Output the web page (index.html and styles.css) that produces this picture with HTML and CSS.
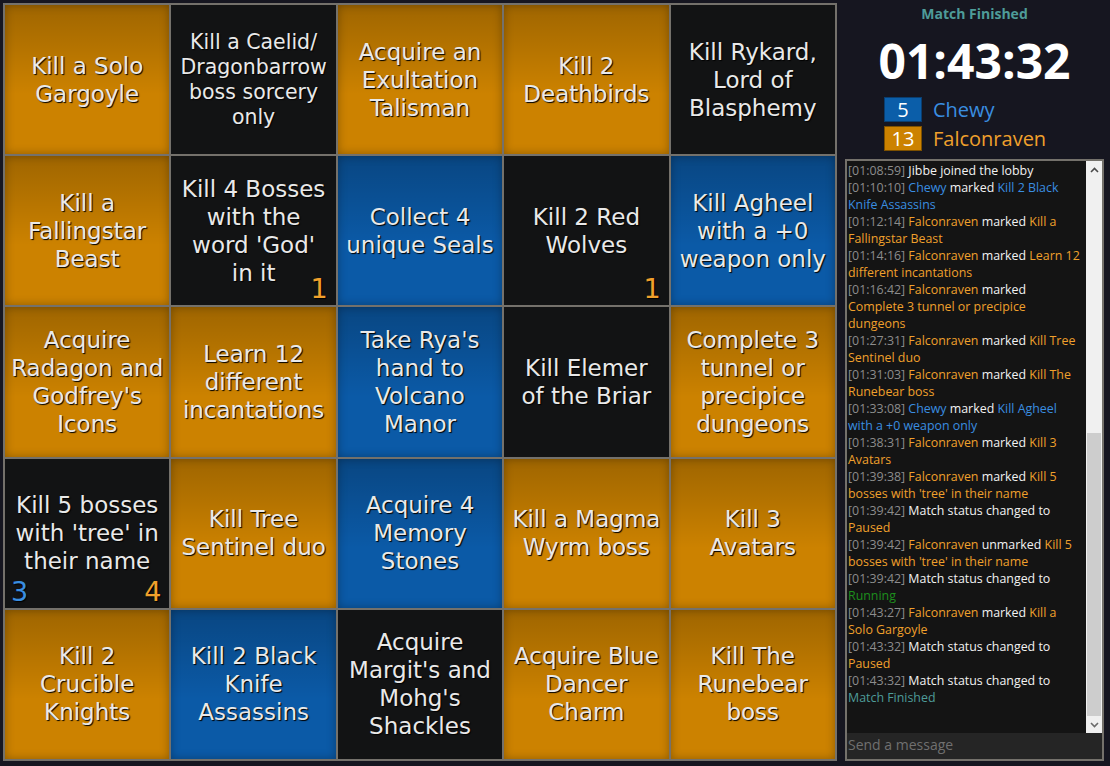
FILE: index.html
```html
<!DOCTYPE html>
<html lang="en">
<head>
<meta charset="utf-8">
<title>Bingo Match</title>
<link rel="stylesheet" href="styles.css">
</head>
<body>
<div class="app">
  <main class="board">
    <div class="tile orange"><span class="label">Kill a Solo<br>Gargoyle</span></div>
    <div class="tile black small"><span class="label">Kill a Caelid/<br>Dragonbarrow<br>boss sorcery<br>only</span></div>
    <div class="tile orange"><span class="label">Acquire an<br>Exultation<br>Talisman</span></div>
    <div class="tile orange"><span class="label">Kill 2<br>Deathbirds</span></div>
    <div class="tile black"><span class="label">Kill Rykard,<br>Lord of<br>Blasphemy</span></div>

    <div class="tile orange"><span class="label">Kill a<br>Fallingstar<br>Beast</span></div>
    <div class="tile black"><span class="label">Kill 4 Bosses<br>with the<br>word 'God'<br>in it</span><span class="mark right c-orange">1</span></div>
    <div class="tile blue"><span class="label">Collect 4<br>unique Seals</span></div>
    <div class="tile black"><span class="label">Kill 2 Red<br>Wolves</span><span class="mark right c-orange">1</span></div>
    <div class="tile blue"><span class="label">Kill Agheel<br>with a +0<br>weapon only</span></div>

    <div class="tile orange"><span class="label">Acquire<br>Radagon and<br>Godfrey's<br>Icons</span></div>
    <div class="tile orange"><span class="label">Learn 12<br>different<br>incantations</span></div>
    <div class="tile blue"><span class="label">Take Rya's<br>hand to<br>Volcano<br>Manor</span></div>
    <div class="tile black"><span class="label">Kill Elemer<br>of the Briar</span></div>
    <div class="tile orange"><span class="label">Complete 3<br>tunnel or<br>precipice<br>dungeons</span></div>

    <div class="tile black"><span class="label">Kill 5 bosses<br>with 'tree' in<br>their name</span><span class="mark left c-blue">3</span><span class="mark right c-orange">4</span></div>
    <div class="tile orange"><span class="label">Kill Tree<br>Sentinel duo</span></div>
    <div class="tile blue"><span class="label">Acquire 4<br>Memory<br>Stones</span></div>
    <div class="tile orange"><span class="label">Kill a Magma<br>Wyrm boss</span></div>
    <div class="tile orange"><span class="label">Kill 3<br>Avatars</span></div>

    <div class="tile orange"><span class="label">Kill 2<br>Crucible<br>Knights</span></div>
    <div class="tile blue"><span class="label">Kill 2 Black<br>Knife<br>Assassins</span></div>
    <div class="tile black"><span class="label">Acquire<br>Margit's and<br>Mohg's<br>Shackles</span></div>
    <div class="tile orange"><span class="label">Acquire Blue<br>Dancer<br>Charm</span></div>
    <div class="tile orange"><span class="label">Kill The<br>Runebear<br>boss</span></div>
  </main>

  <aside class="panel">
    <div class="status">Match Finished</div>
    <div class="timer">01:43:32</div>
    <div class="scores">
      <div class="score"><span class="count count-blue">5</span><span class="name c-blue">Chewy</span></div>
      <div class="score"><span class="count count-orange">13</span><span class="name c-orange">Falconraven</span></div>
    </div>
    <section class="chat">
      <div class="chat-body">
        <div class="messages">
          <p class="msg"><span class="ts">[01:08:59]</span> Jibbe joined the lobby</p>
          <p class="msg"><span class="ts">[01:10:10]</span> <span class="c-blue">Chewy</span> marked <span class="c-blue">Kill 2 Black<br>Knife Assassins</span></p>
          <p class="msg"><span class="ts">[01:12:14]</span> <span class="c-orange">Falconraven</span> marked <span class="c-orange">Kill a<br>Fallingstar Beast</span></p>
          <p class="msg"><span class="ts">[01:14:16]</span> <span class="c-orange">Falconraven</span> marked <span class="c-orange">Learn 12<br>different incantations</span></p>
          <p class="msg"><span class="ts">[01:16:42]</span> <span class="c-orange">Falconraven</span> marked<br><span class="c-orange">Complete 3 tunnel or precipice<br>dungeons</span></p>
          <p class="msg"><span class="ts">[01:27:31]</span> <span class="c-orange">Falconraven</span> marked <span class="c-orange">Kill Tree<br>Sentinel duo</span></p>
          <p class="msg"><span class="ts">[01:31:03]</span> <span class="c-orange">Falconraven</span> marked <span class="c-orange">Kill The<br>Runebear boss</span></p>
          <p class="msg"><span class="ts">[01:33:08]</span> <span class="c-blue">Chewy</span> marked <span class="c-blue">Kill Agheel<br>with a +0 weapon only</span></p>
          <p class="msg"><span class="ts">[01:38:31]</span> <span class="c-orange">Falconraven</span> marked <span class="c-orange">Kill 3<br>Avatars</span></p>
          <p class="msg"><span class="ts">[01:39:38]</span> <span class="c-orange">Falconraven</span> marked <span class="c-orange">Kill 5<br>bosses with 'tree' in their name</span></p>
          <p class="msg"><span class="ts">[01:39:42]</span> Match status changed to<br><span class="c-orange">Paused</span></p>
          <p class="msg"><span class="ts">[01:39:42]</span> <span class="c-orange">Falconraven</span> unmarked <span class="c-orange">Kill 5<br>bosses with 'tree' in their name</span></p>
          <p class="msg"><span class="ts">[01:39:42]</span> Match status changed to<br><span class="c-green">Running</span></p>
          <p class="msg"><span class="ts">[01:43:27]</span> <span class="c-orange">Falconraven</span> marked <span class="c-orange">Kill a<br>Solo Gargoyle</span></p>
          <p class="msg"><span class="ts">[01:43:32]</span> Match status changed to<br><span class="c-orange">Paused</span></p>
          <p class="msg"><span class="ts">[01:43:32]</span> Match status changed to<br><span class="c-teal">Match Finished</span></p>
        </div>
        <div class="scrollbar">
          <div class="sb-btn"><svg width="9" height="6" viewBox="0 0 9 6"><polyline points="1,5 4.5,1.5 8,5" fill="none" stroke="#4a4a4a" stroke-width="1.6"/></svg></div>
          <div class="sb-track"><div class="sb-thumb"></div></div>
          <div class="sb-btn"><svg width="9" height="6" viewBox="0 0 9 6"><polyline points="1,1 4.5,4.5 8,1" fill="none" stroke="#6a6a6a" stroke-width="1.6"/></svg></div>
        </div>
      </div>
      <input class="chat-input" type="text" placeholder="Send a message">
    </section>
  </aside>
</div>
</body>
</html>
```

FILE: styles.css
```css
* { box-sizing: border-box; }

body {
  margin: 0;
  background: #161620;
  font-family: "Open Sans", "Noto Sans", sans-serif;
}

.app {
  display: flex;
  padding: 3px;
  height: 766px;
}

/* ---------- Board ---------- */
.board {
  width: 834px;
  height: 758px;
  flex: none;
  display: grid;
  grid-template-columns: repeat(5, 1fr);
  grid-template-rows: repeat(5, 1fr);
  gap: 2px;
  padding: 2px;
  background: #74716b;
}

.tile {
  position: relative;
  display: flex;
  align-items: center;
  justify-content: center;
  padding: 0 2px;
  text-align: center;
  font-family: "DejaVu Sans", sans-serif;
  font-size: 23px;
  line-height: 28px;
  color: #e9e9e9;
  text-shadow: 1px 1px 1px #000;
  box-shadow: inset 0 0 10px rgba(0, 0, 0, 0.3);
  background-image: linear-gradient(rgba(0, 0, 0, 0.22), rgba(0, 0, 0, 0) 60%);
}

.tile.small {
  font-size: 20.5px;
  line-height: 25px;
}

.orange { background-color: #cc8200; }
.blue { background-color: #0b5aa7; }
.black { background-color: #121314; background-image: none; box-shadow: none; }

.mark {
  position: absolute;
  bottom: 3px;
  font-size: 27px;
  line-height: 1;
}
.mark.left { left: 6px; }
.mark.right { right: 8px; }

.c-orange { color: #f0a02c; }
.c-blue { color: #3a8ee0; }
.c-green { color: #1d8f1d; }
.c-teal { color: #4e9c99; }

/* ---------- Panel ---------- */
.panel {
  width: 259px;
  margin-left: 8px;
  display: flex;
  flex-direction: column;
}

.status {
  margin-top: 1px;
  text-align: center;
  font-weight: 700;
  font-size: 14px;
  line-height: 20px;
  color: #4e9c99;
}

.timer {
  margin-top: 9px;
  text-align: center;
  font-weight: 700;
  font-size: 48px;
  line-height: 56px;
  color: #ffffff;
}

.scores {
  margin-top: 8px;
  padding-left: 39px;
  display: flex;
  flex-direction: column;
  gap: 4px;
}

.score {
  display: flex;
  align-items: center;
  gap: 11px;
  height: 25px;
}

.count {
  width: 38px;
  height: 25px;
  border: 1px solid;
  display: flex;
  align-items: center;
  justify-content: center;
  font-size: 20px;
  color: #fff;
}
.count-blue { background: #0b5ea9; border-color: #0a3e70; }
.count-orange { background: #cc8200; border-color: #7d5000; }

.name {
  font-size: 20px;
  line-height: 25px;
}

/* ---------- Chat ---------- */
.chat {
  flex: 1;
  margin-top: 8px;
  margin-bottom: 2px;
  border: 2px solid #74716b;
  background: #141414;
  display: flex;
  flex-direction: column;
  min-height: 0;
}

.chat-body {
  flex: 1;
  display: flex;
  min-height: 0;
}

.messages {
  flex: 1;
  overflow: hidden;
  padding: 1px 0 0 1px;
  font-size: 12.4px;
  line-height: 17px;
  color: #f2f2f2;
}

.msg { margin: 0; }

.ts { color: #8c8c8c; }

.scrollbar {
  width: 16px;
  display: flex;
  flex-direction: column;
  background: #f0f0f0;
}

.sb-btn {
  height: 17px;
  display: flex;
  align-items: center;
  justify-content: center;
}

.sb-track {
  flex: 1;
  display: flex;
  flex-direction: column;
  justify-content: flex-end;
}

.sb-thumb {
  height: 283px;
  margin: 0 1px;
  background: #cdcdcd;
}

.chat-input {
  height: 26px;
  border: none;
  outline: none;
  background: #252525;
  color: #eee;
  padding: 0 1px 3px;
  font-family: "Open Sans", "Noto Sans", sans-serif;
  font-size: 14px;
}

.chat-input::placeholder { color: #707070; }
```
